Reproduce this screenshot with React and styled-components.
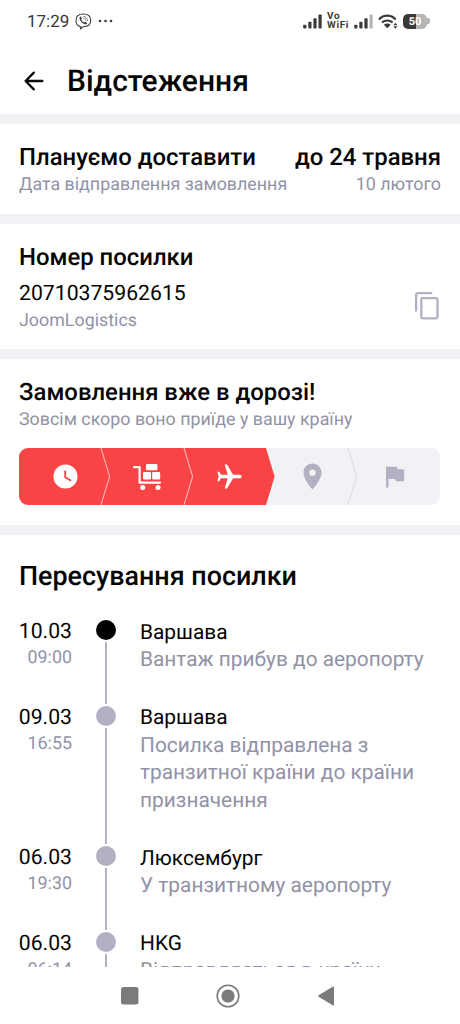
/**
 * @file App.jsx
 * @brief Parcel tracking screen
 **/
import styled, { createGlobalStyle } from "styled-components"
import { MdWatchLater, MdLocalAirport, MdLocationOn, MdFlag } from "react-icons/md"

const colors = {
  text: "#050505",
  muted: "#9292a6",
  icon: "#b1b1c3",
  light: "#f1f2f6",
  red: "#f84444",
  status: "#3a3a3a",
  nav: "#7b7b7b",
}

const GlobalStyle = createGlobalStyle`
  * {
    box-sizing: border-box;
  }
  body {
    margin: 0;
    background: #ffffff;
    font-family: Roboto, "Liberation Sans", sans-serif;
    color: ${colors.text};
    text-rendering: geometricPrecision;
  }
`

/**
 * @brief Screen layout Components
 **/
const Screen = styled.div`
  width: 460px;
  height: 1024px;
  display: flex;
  flex-direction: column;
  overflow: hidden;
  background: #ffffff;
`

const StatusBar = styled.div`
  height: 42px;
  padding: 0 30px 0 27px;
  display: flex;
  align-items: center;
  justify-content: space-between;
  color: ${colors.status};
`

const StatusGroup = styled.div`
  display: flex;
  align-items: center;
  gap: ${props => props.gap || "6px"};
`

const Clock = styled.span`
  padding-top: 1px;
  font-size: 17px;
  line-height: 20px;
`

const VoWifi = styled.span`
  display: flex;
  flex-direction: column;
  font-size: 10px;
  font-weight: 700;
  line-height: 9px;
  letter-spacing: 0.6px;
`

const Battery = styled.span`
  width: 24px;
  height: 15px;
  border-radius: 5px;
  background: linear-gradient(90deg, ${colors.status} 54%, #b5b5b5 54%);
  color: #ffffff;
  font-size: 11px;
  font-weight: 700;
  line-height: 15px;
  text-align: center;
`

const BatteryWrap = styled.span`
  display: flex;
  align-items: center;
  &::after {
    content: "";
    width: 3px;
    height: 6px;
    border-radius: 0 2px 2px 0;
    background: #b5b5b5;
  }
`

const Header = styled.header`
  height: 72px;
  padding: 5px 20px 0 21px;
  display: flex;
  align-items: center;
  gap: 20px;
`

const PageTitle = styled.h1`
  margin: 0;
  padding-top: 2px;
  font-size: 30px;
  font-weight: 500;
  line-height: 36px;
`

/**
 * @brief Section with the gray separator on top
 **/
const Section = styled.section`
  flex: ${props => props.height ? "none" : "1"};
  height: ${props => props.height || "auto"};
  min-height: 0;
  padding: ${props => props.padding};
  border-top: 10px solid ${colors.light};
  overflow: hidden;
`

const SplitRow = styled.div`
  display: flex;
  align-items: center;
  justify-content: space-between;
`

const SectionTitle = styled.div`
  font-size: ${props => props.size || "23.9px"};
  font-weight: 500;
  line-height: 28px;
  white-space: nowrap;
`

const Caption = styled.div`
  padding-top: 1px;
  font-size: 17.85px;
  line-height: 26px;
  color: ${colors.muted};
  white-space: nowrap;
`

const ParcelNumber = styled.div`
  margin-top: 10px;
  font-size: 21.2px;
  line-height: 26px;
`

const CopyButton = styled.button`
  margin: 7px 1px 0 0;
  padding: 0;
  border: 0;
  background: none;
  display: flex;
`

/**
 * @brief Delivery steps
 **/
const Steps = styled.div`
  height: 57px;
  margin-top: 15px;
  display: flex;
  border-radius: 9px;
  overflow: hidden;
  background: ${colors.light};
`

const Step = styled.div`
  position: relative;
  flex: ${props => props.last ? "1" : "0 0 82.3px"};
  padding-left: ${props => props.last ? "0" : "10px"};
  display: flex;
  align-items: center;
  justify-content: center;
  background: ${props => props.done ? colors.red : colors.light};
  color: ${props => props.done ? "#ffffff" : colors.icon};
`

const StepTip = styled.svg`
  position: absolute;
  left: calc(100% - 1px);
  top: 0;
  z-index: 1;
`

/**
 * @brief Parcel history
 **/
const Timeline = styled.div`
  margin-top: 28.4px;
`

const Event = styled.div`
  display: grid;
  grid-template-columns: 53px 68px 1fr;
`

const EventDate = styled.div`
  display: flex;
  flex-direction: column;
  align-items: flex-end;
`

const Day = styled.span`
  font-size: 21.2px;
  line-height: 27px;
`

const Hour = styled.span`
  font-size: 17.85px;
  line-height: 25px;
  color: ${colors.muted};
`

const Track = styled.div`
  display: flex;
  flex-direction: column;
  align-items: center;
`

const Dot = styled.span`
  flex: none;
  width: 20px;
  height: 20px;
  margin: 2px 0;
  border-radius: 50%;
  background: ${props => props.current ? "#000000" : colors.icon};
`

const Line = styled.span`
  flex: 1;
  width: 2.6px;
  background: ${colors.icon};
`

const EventBody = styled.div`
  padding: 1.4px 0 28.4px;
  font-size: 20.87px;
`

const Place = styled.div`
  line-height: 27.6px;
`

const Description = styled.div`
  line-height: 27.8px;
  color: ${colors.muted};
  white-space: pre-line;
`

const NavBar = styled.nav`
  height: 57px;
  flex: none;
  padding: 0 125px 0 120px;
  display: flex;
  align-items: center;
  justify-content: space-between;
  background: #ffffff;
`

/**
 * @brief Icons
 **/
const ViberIcon = () => (
  <svg width="17" height="17" viewBox="0 0 17 17" fill="none" stroke="currentColor" strokeLinecap="round" strokeLinejoin="round">
    <path d="M5.6 13.8C2.4 13 1 11.2 1 7.4C1 2.8 3.3 1 8.3 1S15.7 2.8 15.7 7.4S13.4 13.6 8.2 13.7L5.6 16Z" strokeWidth="1.1" />
    <path d="M4.9 4.1C5.5 3.4 6 3.8 6.8 5.2C6.9 5.6 6 6.1 6.3 6.8C6.8 8.2 7.7 9.1 8.9 9.5C9.5 9.7 9.8 8.7 10.3 8.9C12 9.7 12.3 10.1 11.5 11C9.6 12.7 3.3 7.5 4.9 4.1Z" fill="currentColor" strokeWidth="0.2" />
    <path d="M8.5 3.5C11 3.6 12.4 5 12.5 7.8M8.8 5.2C10 5.3 10.7 6 10.8 7.3" strokeWidth="0.6" />
  </svg>
)

const MoreDots = () => (
  <svg width="15" height="4" viewBox="0 0 15 4" fill="currentColor">
    <circle cx="2" cy="2" r="1.3" />
    <circle cx="7.5" cy="2" r="1.3" />
    <circle cx="13" cy="2" r="1.3" />
  </svg>
)

const Signal = ({ weak }) => (
  <svg width="19" height="15" viewBox="0 0 19 15" fill="currentColor">
    <rect x="0.2" y="10.8" width="3.2" height="3.7" rx="0.8" />
    <rect x="5.3" y="7.8" width="3.2" height="6.7" rx="0.8" />
    <rect x="10.4" y="4.2" width="3.2" height="10.3" rx="0.8" />
    <rect x="15.5" y="0.4" width="3.2" height="14.1" rx="0.8" fill={weak ? "#b5b5b5" : "currentColor"} />
  </svg>
)

const WifiIcon = () => (
  <svg width="20" height="15" viewBox="0 0 20 15" fill="none" stroke="currentColor" strokeWidth="2.1">
    <path d="M0.9 5.4C5.7 0.4 12.9 0.4 17.7 5.4" />
    <path d="M4 8.6C7 5.7 11.6 5.7 14.6 8.6" />
    <path d="M5.9 10.8C7.7 9.2 10.9 9.2 12.7 10.8L9.3 14.3Z" fill="currentColor" stroke="none" />
    <path d="M15.4 11.2L17.4 8.7L19.4 11.2ZM15.4 12.2L17.4 14.7L19.4 12.2Z" fill="currentColor" stroke="none" />
  </svg>
)

const BackIcon = () => (
  <svg width="26" height="24" viewBox="0 0 26 24" fill="none" stroke="#0b0b0d" strokeWidth="2.3" strokeLinecap="round" strokeLinejoin="round">
    <path d="M12.8 3.6L4.6 12L12.8 20.4M4.6 12H21.4" />
  </svg>
)

const CopyIcon = () => (
  <svg width="26" height="30" viewBox="0 0 26 30" fill="none" stroke={colors.icon} strokeWidth="2.3" strokeLinejoin="round">
    <path d="M2.1 20.5V4.2Q2.1 2.2 4.1 2.2H18.3" />
    <rect x="7.3" y="7.2" width="16.2" height="20.2" rx="1.3" />
  </svg>
)

const CartIcon = () => (
  <svg width="30" height="28" viewBox="0 0 30 28" fill="currentColor">
    <path d="M2 4.2H7.6V19.6H28" fill="none" stroke="currentColor" strokeWidth="2.2" strokeLinecap="round" strokeLinejoin="round" />
    <rect x="14" y="1" width="11.4" height="6.2" rx="1" />
    <rect x="11" y="9" width="8" height="7.6" rx="1" />
    <rect x="20.2" y="9" width="8" height="7.6" rx="1" />
    <circle cx="10.7" cy="24.6" r="2.5" />
    <circle cx="26" cy="24.6" r="2.5" />
  </svg>
)

const PlaneIcon = styled(MdLocalAirport)`
  transform: rotate(90deg);
`

const NavIcon = styled.svg`
  fill: ${colors.nav};
`

const Tip = ({ done, edge }) => (
  <StepTip width="11" height="57" viewBox="0 0 11 57">
    <path d="M0 0H1L9.6 28.5L1 57H0Z" fill={done ? colors.red : colors.light} />
    {!edge && <path d="M1 0L9.6 28.5L1 57" fill="none" stroke={done ? "#fcb4b4" : "#dddde4"} strokeWidth="1.1" />}
  </StepTip>
)

const steps = [
  { icon: <MdWatchLater size={29} />, done: true },
  { icon: <CartIcon />, done: true },
  { icon: <PlaneIcon size={29} />, done: true, edge: true },
  { icon: <MdLocationOn size={31} /> },
  { icon: <MdFlag size={29} />, last: true },
]

const events = [
  { day: "10.03", hour: "09:00", place: "Варшава", text: "Вантаж прибув до аеропорту" },
  { day: "09.03", hour: "16:55", place: "Варшава", text: "Посилка відправлена з\nтранзитної країни до країни\nпризначення" },
  { day: "06.03", hour: "19:30", place: "Люксембург", text: "У транзитному аеропорту" },
  { day: "06.03", hour: "06:14", place: "HKG", text: "Відправляється в країну" },
]

/**
 * @brief App : Component
 **/
export default function App() {
  return (
    <Screen>
      <GlobalStyle />
      <StatusBar>
        <StatusGroup>
          <Clock>17:29</Clock>
          <ViberIcon />
          <MoreDots />
        </StatusGroup>
        <StatusGroup gap="5px">
          <Signal />
          <VoWifi>
            <span>Vo</span>
            <span>WiFi</span>
          </VoWifi>
          <Signal weak />
          <WifiIcon />
          <BatteryWrap>
            <Battery>50</Battery>
          </BatteryWrap>
        </StatusGroup>
      </StatusBar>

      <Header>
        <BackIcon />
        <PageTitle>Відстеження</PageTitle>
      </Header>

      <Section height="100px" padding="19px 19px 0">
        <SplitRow>
          <SectionTitle>Плануємо доставити</SectionTitle>
          <SectionTitle>до 24 травня</SectionTitle>
        </SplitRow>
        <SplitRow>
          <Caption>Дата відправлення замовлення</Caption>
          <Caption>10 лютого</Caption>
        </SplitRow>
      </Section>

      <Section height="135px" padding="19px 19px 0">
        <SectionTitle>Номер посилки</SectionTitle>
        <SplitRow>
          <div>
            <ParcelNumber>20710375962615</ParcelNumber>
            <Caption>JoomLogistics</Caption>
          </div>
          <CopyButton aria-label="Копіювати">
            <CopyIcon />
          </CopyButton>
        </SplitRow>
      </Section>

      <Section height="176px" padding="19px 20px 0 19px">
        <SectionTitle>Замовлення вже в дорозі!</SectionTitle>
        <Caption>Зовсім скоро воно приїде у вашу країну</Caption>
        <Steps>
          {steps.map((step, index) => (
            <Step key={index} done={step.done} last={step.last}>
              {step.icon}
              {!step.last && <Tip done={step.done} edge={step.edge} />}
            </Step>
          ))}
        </Steps>
      </Section>

      <Section padding="27px 19px 0">
        <SectionTitle size="26.9px">Пересування посилки</SectionTitle>
        <Timeline>
          {events.map((event, index) => (
            <Event key={index}>
              <EventDate>
                <Day>{event.day}</Day>
                <Hour>{event.hour}</Hour>
              </EventDate>
              <Track>
                <Dot current={index === 0} />
                <Line />
              </Track>
              <EventBody>
                <Place>{event.place}</Place>
                <Description>{event.text}</Description>
              </EventBody>
            </Event>
          ))}
        </Timeline>
      </Section>

      <NavBar>
        <NavIcon width="19" height="19" viewBox="0 0 19 19">
          <rect x="1" y="1" width="17.4" height="17.4" rx="2.5" />
        </NavIcon>
        <NavIcon width="24" height="24" viewBox="0 0 24 24">
          <circle cx="12" cy="12" r="10.8" fill="none" stroke={colors.nav} strokeWidth="1.6" />
          <circle cx="12" cy="12" r="6.6" />
        </NavIcon>
        <NavIcon width="18" height="20" viewBox="0 0 18 20">
          <path d="M15.6 0.7Q17 0 17 1.5V18.5Q17 20 15.6 19.3L1.6 10.8Q0.6 10 1.6 9.2Z" />
        </NavIcon>
      </NavBar>
    </Screen>
  )
}
